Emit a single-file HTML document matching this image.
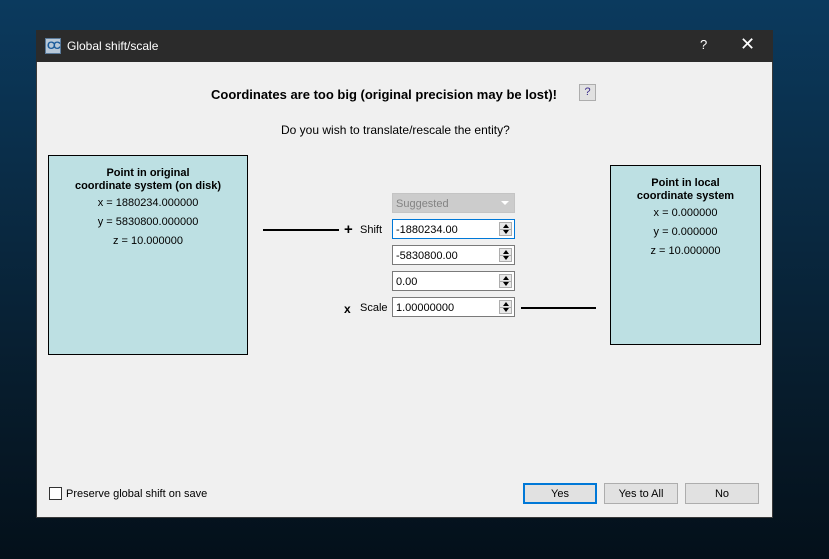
<!DOCTYPE html>
<html><head><meta charset="utf-8"><style>
*{box-sizing:border-box;margin:0;padding:0}
body{width:829px;height:559px;overflow:hidden;position:relative;font-family:"Liberation Sans",sans-serif;font-size:11px;color:#000;
background:linear-gradient(180deg,#0b3a5e 0%,#0a2d48 30%,#071c2c 70%,#04101a 100%)}
.a{position:absolute}
#win{left:36px;top:30px;width:737px;height:488px;background:#f0f0f0;border:1px solid #3a3a3a}
#tb{left:-1px;top:-1px;width:737px;height:32px;background:#2b2b2b;color:#fff;font-family:"Liberation Sans",sans-serif;font-size:12px}
.box{background:#bde0e3;border:1px solid #000;text-align:center;font-size:11px}
.box b{display:block;line-height:13px}
.box div{line-height:19px}
.inp{background:#fff;border:1px solid #7a7a7a;height:20px;width:123px;font-size:11px;line-height:20px;padding-left:3px}
.spin{position:absolute;right:2px;top:2px;width:13px;height:14px;border:1px solid #adadad;background:#e8e8e8}
.spin:before{content:"";position:absolute;left:3px;top:1px;border:3px solid transparent;border-bottom:4px solid #000;border-top:0}
.spin:after{content:"";position:absolute;left:3px;top:7px;border:3px solid transparent;border-top:4px solid #000;border-bottom:0}
.spin i{position:absolute;left:0;top:6px;width:11px;height:1px;background:#adadad}
.btn{background:#e1e1e1;border:1px solid #adadad;height:21px;width:74px;text-align:center;line-height:21px;font-size:11px}
.line{height:2px;background:#000}
</style></head><body>
<div id="win" class="a">
 <div id="tb" class="a">
  <div class="a" style="left:9px;top:8px;width:16px;height:16px;background:#b8c8d8;border:1px solid #5a7a9a;color:#1a5a9a;font-size:11px;font-weight:bold;line-height:14px;text-align:center;letter-spacing:-2px">CC</div>
  <div class="a" style="left:31px;top:9px">Global shift/scale</div>
  <div class="a" style="left:664px;top:7px;font-size:13px">?</div>
  <div class="a" style="left:704px;top:4px;font-size:18px;font-weight:300">✕</div>
 </div>
 <div class="a" style="left:174px;top:56px;font-size:13px;font-weight:bold">Coordinates are too big (original precision may be lost)!</div>
 <div class="a" style="left:542px;top:53px;width:17px;height:17px;border:1px solid #adadad;background:#e1e1e1;text-align:center;line-height:15px;color:#3a2a8a">?</div>
 <div class="a" style="left:244px;top:92px;font-size:12px">Do you wish to translate/rescale the entity?</div>

 <div class="a box" style="left:11px;top:124px;width:200px;height:200px;padding-top:11px">
  <b>Point in original<br>coordinate system (on disk)</b>
  <div style="margin-top:1px">x = 1880234.000000</div><div>y = 5830800.000000</div><div>z = 10.000000</div>
 </div>
 <div class="a box" style="left:573px;top:134px;width:151px;height:180px;padding-top:11px">
  <b>Point in local<br>coordinate system</b>
  <div style="margin-top:1px">x = 0.000000</div><div>y = 0.000000</div><div>z = 10.000000</div>
 </div>

 <div class="a line" style="left:226px;top:198px;width:76px"></div>
 <div class="a" style="left:307px;top:190px;font-size:15px;font-weight:bold">+</div>
 <div class="a" style="left:323px;top:193px">Shift</div>
 <div class="a" style="left:307px;top:271px;font-size:12px;font-weight:bold">x</div>
 <div class="a" style="left:323px;top:271px">Scale</div>
 <div class="a line" style="left:484px;top:276px;width:75px"></div>

 <div class="a" style="left:355px;top:162px;width:123px;height:20px;background:#cccccc;border:1px solid #c4c4c4;color:#838383;line-height:20px;padding-left:3px">Suggested<span style="position:absolute;right:5px;top:7px;border:4px solid transparent;border-top:4px solid #fff;border-bottom:0"></span></div>
 <div class="a inp" style="left:355px;top:188px;border-color:#0078d7">-1880234.00<span class="spin"><i></i></span></div>
 <div class="a inp" style="left:355px;top:214px">-5830800.00<span class="spin"><i></i></span></div>
 <div class="a inp" style="left:355px;top:240px">0.00<span class="spin"><i></i></span></div>
 <div class="a inp" style="left:355px;top:266px">1.00000000<span class="spin"><i></i></span></div>

 <div class="a" style="left:12px;top:456px;width:13px;height:13px;border:1px solid #333;background:#fff"></div>
 <div class="a" style="left:29px;top:457px">Preserve global shift on save</div>
 <div class="a btn" style="left:486px;top:452px;border:2px solid #0078d7;line-height:19px">Yes</div>
 <div class="a btn" style="left:567px;top:452px">Yes to All</div>
 <div class="a btn" style="left:648px;top:452px">No</div>
</div>
</body></html>
